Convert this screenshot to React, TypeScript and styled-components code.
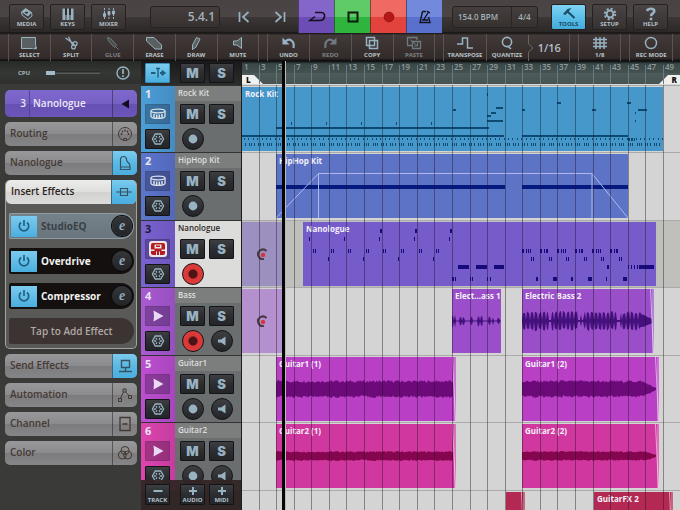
import React from 'react';
import styled, { createGlobalStyle, css } from 'styled-components';

const GlobalStyle = createGlobalStyle`
  * { box-sizing: border-box; }
  html, body { margin: 0; padding: 0; background: #1b1a1a; }
  body { font-family: "Open Sans", "Noto Sans", sans-serif; overflow: hidden; }
  button { font-family: inherit; margin: 0; padding: 0; border: 0; background: none; color: inherit; cursor: pointer; }
  h1, h2, p, ul, li { margin: 0; padding: 0; list-style: none; font-weight: 600; }
  svg { display: block; flex: none; }
`;

const ICE = '#98b2c1';

const Shell = styled.div`
  height: 100vh;
  display: flex;
  flex-direction: column;
  overflow: hidden;
  color: #a9b6bd;
`;

/* ---------- transport bar ---------- */

const TransportBar = styled.header`
  height: 33px;
  flex: none;
  display: flex;
  align-items: center;
  padding: 0 12px 0 9px;
  background: linear-gradient(#494343, #4b4645 50%, #3c3736 51%, #2d2928 95%, #141212);
`;

const ButtonGroup = styled.div<{ $end?: boolean }>`
  display: flex;
  gap: 6px;
  ${(p) => p.$end && css`margin-left: auto;`}
`;

const PanelButton = styled.button<{ $active?: boolean }>`
  width: 35px;
  height: 26px;
  display: flex;
  flex-direction: column;
  align-items: center;
  justify-content: space-between;
  padding: 2px 0 1px;
  border: 1px solid #262121;
  border-radius: 2px;
  font-size: 6px;
  line-height: 7px;
  font-weight: 700;
  color: ${(p) => (p.$active ? '#1c4a63' : '#b4bfc6')};
  background: ${(p) =>
    p.$active ? 'linear-gradient(#7fd3f5, #5bbfe9 50%, #43abdb)' : 'linear-gradient(#4a4444, #363131)'};
`;

const Display = styled.div`
  height: 22px;
  display: flex;
  align-items: center;
  border: 1px solid #272222;
  border-radius: 3px;
  background: linear-gradient(#443f3e, #37322f);
  color: #a3b1ba;
  font-weight: 600;
`;

const Position = styled(Display)`
  width: 70px;
  margin-left: 24px;
  padding-right: 4px;
  justify-content: flex-end;
  font-size: 12px;
  line-height: 20px;
`;

const Tempo = styled(Display)`
  width: 86px;
  margin-left: 10px;
  font-size: 8px;
  line-height: 20px;
`;

const TempoPart = styled.span<{ $grow?: boolean }>`
  width: 26px;
  text-align: center;
  border-left: 1px solid #2a2626;
  ${(p) => p.$grow && css`width: auto; flex: 1; padding-left: 5px; text-align: left; border-left: 0;`}
`;

const Transport = styled.div`
  display: flex;
  margin-left: 6px;
  align-self: stretch;
`;

const TransportButton = styled.button<{ $tone?: string; $tone2?: string }>`
  width: 36px;
  display: flex;
  align-items: center;
  justify-content: center;
  ${(p) =>
    p.$tone &&
    css`
      border-left: 1px solid rgba(30, 20, 30, 0.5);
      background: linear-gradient(${p.$tone} 50%, ${p.$tone2} 52%);
    `}
`;

/* ---------- edit toolbar ---------- */

const Toolbar = styled.nav`
  height: 28px;
  flex: none;
  display: flex;
  padding: 1px 7px 0 8px;
  background: linear-gradient(#181515, #423a39 8%, #3a3231 50%, #322b2a 90%, #0c0b0b);
`;

const Cells = styled.div<{ $n: number }>`
  flex: ${(p) => p.$n} 0 0;
  display: flex;
  min-width: 0;
  border-left: 1px solid #5b5351;
  border-right: 1px solid #5b5351;
  & + & { margin-left: 8px; }
`;

const ToolButton = styled.button<{ $dim?: boolean }>`
  flex: 1 0 0;
  min-width: 0;
  display: flex;
  flex-direction: column;
  align-items: center;
  justify-content: space-between;
  padding: 2px 0 2px;
  font-size: 6px;
  line-height: 8px;
  font-weight: 700;
  white-space: nowrap;
  color: #b9c4ca;
  & > svg, & > span { opacity: ${(p) => (p.$dim ? 0.55 : 1)}; }
  & + & { border-left: 1px solid #5b5351; }
`;

const QuantizeValue = styled.button`
  flex: 1 0 0;
  display: flex;
  align-items: center;
  font-size: 11px;
  line-height: 14px;
  font-weight: 600;
  color: #b4bfc6;
  gap: 4px;
`;

/* ---------- body ---------- */

const Body = styled.main`
  flex: 1;
  min-height: 0;
  display: flex;
`;

const Inspector = styled.aside`
  width: 141px;
  flex: none;
  background: #3a3a38;
`;

const CpuRow = styled.div`
  height: 23px;
  display: flex;
  align-items: center;
  padding: 0 11px 0 18px;
  gap: 16px;
  font-size: 6px;
  line-height: 8px;
  font-weight: 700;
  background: linear-gradient(#282a27, #343733 50%, #2d302c);
`;

const Meter = styled.div`
  flex: 1;
  height: 3px;
  background: linear-gradient(#1d1f1d, #656966);
`;

const MeterFill = styled.div`
  height: 4px;
  background: #a5bac7;
`;

const Sections = styled.div`
  display: flex;
  flex-direction: column;
  gap: 5px;
  padding: 6px 4px 0 5px;
`;

const Selected = styled.button`
  height: 27px;
  display: flex;
  align-items: stretch;
  border-radius: 5px;
  overflow: hidden;
  font-size: 10px;
  line-height: 27px;
  font-weight: 600;
  color: #ece8f6;
  text-align: left;
  background: linear-gradient(#7f69cd, #7660c5 50%, #6650b3 51%, #6b55ba);
`;

const SelectedNumber = styled.span`
  width: 25px;
  padding-right: 3px;
  text-align: right;
  border-right: 1px solid #55439a;
`;

const SelectedName = styled.span`
  flex: 1;
  padding-left: 3px;
`;

const IconCell = styled.span<{ $on?: boolean }>`
  width: 25px;
  display: flex;
  align-items: center;
  justify-content: center;
  border-left: 1px solid rgba(40, 36, 36, 0.55);
  ${(p) => p.$on && css`background: linear-gradient(#7ccbee, #5ab9e5 50%, #4aaedf);`}
`;

const Section = styled.button<{ $open?: boolean }>`
  width: 100%;
  height: 24px;
  display: flex;
  align-items: stretch;
  border-radius: 5px;
  overflow: hidden;
  font-size: 10px;
  line-height: 23px;
  font-weight: 600;
  color: ${(p) => (p.$open ? '#2c2320' : '#463a35')};
  text-align: left;
  background: ${(p) =>
    p.$open
      ? 'linear-gradient(#ececeb, #dededd 50%, #d2d2d1 51%, #dcdcdb)'
      : 'linear-gradient(#98989a, #8b8b8d 50%, #7c7c7e 51%, #868688)'};
`;

const SectionName = styled.span`
  flex: 1;
  padding-left: 5px;
`;

const EffectGroup = styled.div`
  border: 1px solid #a2a2a2;
  border-top: 0;
  border-radius: 5px;
  background: #595958;
`;

const Effects = styled.div`
  display: flex;
  flex-direction: column;
  gap: 9px;
  padding: 9px 2px 4px 3px;
`;

const Effect = styled.div<{ $off?: boolean }>`
  height: 26px;
  display: flex;
  align-items: center;
  padding: 2px 1px 2px 2px;
  border-radius: 2px 13px 13px 2px;
  font-size: 10px;
  line-height: 22px;
  color: ${(p) => (p.$off ? '#394146' : '#f2f2f2')};
  background: ${(p) => (p.$off ? 'linear-gradient(#76828a, #69757c)' : '#14100f')};
  ${(p) => p.$off && css`box-shadow: inset 0 0 0 1px #8f9ba2;`}
`;

const Power = styled.button`
  width: 26px;
  height: 21px;
  display: flex;
  align-items: center;
  justify-content: center;
  background: linear-gradient(#7ccbee, #4aaedf);
`;

const EffectName = styled.span`
  flex: 1;
  padding-left: 4px;
  font-weight: 700;
`;

const EditEffect = styled.button`
  width: 20px;
  height: 20px;
  margin-right: 1px;
  border-radius: 50%;
  background: linear-gradient(#34363a, #232428);
  box-shadow: 0 0 0 1px #0d0c0c;
  color: #93a9b8;
  font: italic 700 14px "Liberation Serif", serif;
  line-height: 16px;
`;

const AddEffect = styled.button`
  height: 26px;
  border-radius: 2px 13px 13px 2px;
  background: #3c3433;
  color: #b0a7a3;
  font-size: 10px;
  line-height: 24px;
  font-weight: 600;
`;

/* ---------- track list ---------- */

const TrackPanel = styled.section`
  position: relative;
  width: 101px;
  flex: none;
  overflow: hidden;
  border-right: 1px solid #1c1c1c;
  background: #3a3a38;
`;

const TrackTop = styled.div`
  height: 24px;
  display: flex;
  gap: 4px;
  align-items: center;
  padding: 0 0 0 4px;
  background: linear-gradient(#191919, #2c2e2b);
`;

const Key = styled.button<{ $active?: boolean; $bare?: boolean; $gap?: boolean }>`
  width: 25px;
  height: 20px;
  flex: none;
  display: flex;
  align-items: center;
  justify-content: center;
  border: 1px solid #131417;
  border-radius: 1px;
  background: linear-gradient(#3c3e41, #2b2d30 50%, #232528);
  color: ${ICE};
  font: 900 13px Inter, "Open Sans", sans-serif;
  line-height: 18px;
  ${(p) => p.$gap && css`margin-right: 6px;`}
  ${(p) => p.$active && css`background: linear-gradient(#7ccbee, #4aaedf); border-color: #3a8fb8;`}
  ${(p) => p.$bare && css`background: rgba(20, 10, 30, 0.28); border-color: rgba(20, 10, 30, 0.1);`}
`;

const Track = styled.li<{ $tint: string }>`
  height: 67px;
  display: flex;
  border-top: 1px solid #333;
  background: ${(p) => p.$tint};
  &:nth-child(even) { height: 68px; }
`;

const Strip = styled.div`
  width: 34px;
  padding: 3px 0 0 4px;
  display: flex;
  flex-direction: column;
  gap: 5px;
  background: linear-gradient(90deg, transparent, rgba(20, 0, 60, 0.12));
`;

const TrackNumber = styled.span<{ $dark?: boolean }>`
  height: 10px;
  font-size: 11px;
  line-height: 10px;
  font-weight: 700;
  color: ${(p) => (p.$dark ? '#231c38' : '#e8e4f0')};
`;

const Pane = styled.div<{ $selected?: boolean }>`
  flex: 1;
  display: flex;
  flex-direction: column;
  background: ${(p) => (p.$selected ? '#dcdcda' : '#6b6e6e')};
`;

const TrackName = styled.h2<{ $dark?: boolean }>`
  height: 15px;
  padding-left: 3px;
  font-size: 8px;
  line-height: 14px;
  color: ${(p) => (p.$dark ? '#2e2626' : '#dedede')};
  background: ${(p) => (p.$dark ? 'transparent' : '#7c7e7e')};
`;

const Controls = styled.div`
  display: grid;
  grid-template-columns: 25px 25px;
  gap: 4px;
  padding: 3px 0 0 5px;
`;

const Round = styled.button<{ $armed?: boolean }>`
  width: 22px;
  height: 22px;
  display: flex;
  align-items: center;
  justify-content: center;
  justify-self: center;
  border-radius: 50%;
  border: 1px solid #121315;
  background: ${(p) =>
    p.$armed ? 'radial-gradient(#4c1414 28%, #d93636 36%, #e24040)' : 'linear-gradient(#3d3f42, #232528)'};
`;

const AddBar = styled.div`
  position: absolute;
  left: 0;
  right: 0;
  bottom: 0;
  height: 30px;
  display: flex;
  gap: 4px;
  padding: 4px 0 0 4px;
  background: rgba(50, 37, 37, 0.94);
`;

const AddButton = styled(Key)`
  height: 21px;
  flex-direction: column;
  justify-content: space-between;
  padding: 1px 0 0;
  font: 700 6px "Open Sans", sans-serif;
  line-height: 8px;
  color: #b4c3cc;
`;

/* ---------- arrange view ---------- */

const Timeline = styled.section`
  position: relative;
  flex: 1;
  min-width: 0;
  display: flex;
  flex-direction: column;
  overflow: hidden;
  background: #d3d4d3;
`;

const Ruler = styled.div`
  position: relative;
  height: 24px;
  flex: none;
  border-bottom: 1px solid #d5d8d8;
  background: linear-gradient(#0a0c0c, #3a4747 12%, #435151 50%, #4d5b5b 52%, #465454);
`;

const BarNumber = styled.span`
  position: absolute;
  top: 0;
  font-size: 8px;
  line-height: 11px;
  font-weight: 600;
  color: #8f9999;
`;

const Locator = styled.svg<{ $right?: boolean }>`
  position: absolute;
  bottom: 0;
  ${(p) => (p.$right ? css`right: 0;` : css`left: 0;`)}
`;

const LocatorLabel = styled.span<{ $right?: boolean }>`
  position: absolute;
  bottom: 0;
  z-index: 1;
  font-size: 8px;
  line-height: 9px;
  font-weight: 800;
  color: #111;
  ${(p) => (p.$right ? css`right: 3px;` : css`left: 4px;`)}
`;

const Lane = styled.div<{ $selected?: boolean }>`
  position: relative;
  height: 67px;
  flex: none;
  border-top: 1px solid #a9aaa9;
  background: ${(p) => (p.$selected ? '#bfc0bb' : 'transparent')};
  &:nth-of-type(odd) { height: 68px; }
  &:last-of-type { flex: 1; }
`;

const ClipBox = styled.div<{ $tint: string }>`
  position: absolute;
  top: 1px;
  height: 64px;
  overflow: hidden;
  background: ${(p) => p.$tint};
`;

const ClipTitle = styled.p`
  position: absolute;
  top: 0;
  left: 3px;
  font-size: 8px;
  line-height: 14px;
  font-weight: 700;
  color: #f4f1fa;
  white-space: nowrap;
`;

const Ghost = styled.div<{ $tint: string }>`
  position: absolute;
  top: 1px;
  left: 0;
  width: 40px;
  height: 64px;
  display: flex;
  align-items: center;
  justify-content: center;
  background: ${(p) => p.$tint};
`;

const GridLines = styled.svg`
  position: absolute;
  inset: 0;
  width: 100%;
  height: 100%;
  pointer-events: none;
`;

const PlayCursor = styled.div`
  position: absolute;
  top: 0;
  bottom: 0;
  left: 40px;
  width: 4px;
  border-right: 1px solid #b9b9b9;
  background: #050505;
`;

/* ---------- icons ---------- */

type IconProps = { w: number; h: number; c?: string; sw?: number; children: React.ReactNode };
const Icon = ({ w, h, c = ICE, sw = 1, children }: IconProps) => (
  <svg width={w} height={h} viewBox={`0 0 ${w} ${h}`} fill="none" stroke={c} strokeWidth={sw} aria-hidden="true">
    {children}
  </svg>
);

const DARK = '#43372f';
const NAVY = '#39525f';

const icons = {
  media: (
    <Icon w={14} h={14}>
      <path d="M5.500 1.500 11.500 5.500 12 9 8 12.500 2 8 1.500 5Z" />
      <path d="M5.500 1.500 11.500 5.500 8 9.500 1.500 5Z" fill={ICE} stroke="none" />
      <path d="M5.500 4.500 8.500 5 7 7 4.500 6Z" fill="#3d3838" stroke="none" />
    </Icon>
  ),
  keys: (
    <Icon w={14} h={14}>
      <path d="M1.500 1.500h3V13h-3ZM5.500 1.500h3V13h-3ZM9.500 1.500h3V13h-3Z" fill={ICE} stroke="none" />
      <path d="M5 1v7M9 1v7" stroke="#332e2e" strokeWidth="2" />
    </Icon>
  ),
  mixer: (
    <Icon w={14} h={14}>
      <path d="M2.500 1v12M7 1v12M11.500 1v12" strokeDasharray="2 1" />
      <path d="M1.500 6.500h2v3h-2ZM6 4.500h2v3h-2ZM10.500 4h2v3h-2Z" fill={ICE} />
    </Icon>
  ),
  tools: (
    <Icon w={14} h={14} c="#1d4d66">
      <path d="M5.500 4.500 12.500 11" strokeWidth="2" />
      <path d="M1 7 5.500 2 9.500 1 7 4 3.500 8Z" fill="#1d4d66" stroke="none" />
    </Icon>
  ),
  setup: (
    <Icon w={14} h={14}>
      <circle cx="7" cy="7" r="3.400" strokeWidth="2" />
      <circle cx="7" cy="7" r="5.200" strokeWidth="2" strokeDasharray="2.050 2.034" />
    </Icon>
  ),
  help: (
    <Icon w={14} h={14} sw={2.6}>
      <path d="M3 4C4 1 10.500 1 10.300 4.200 10.200 6.500 7 6.300 7 9.300M7 10.700v2.600" />
    </Icon>
  ),
  prev: <Icon w={12} h={12} sw={1.7}><path d="M1.500 1v10M10.500 1 5 6l5.500 5" /></Icon>,
  next: <Icon w={12} h={12} sw={1.7}><path d="M10.500 1v10M1.500 1 7 6l-5.500 5" /></Icon>,
  loop: (
    <Icon w={18} h={12} c="#15111d" sw={1.6}>
      <path d="M7 1.500h6.500C15.500 1.500 17 3.400 16.500 5.500 16 8 14 9.500 12 9.500H2L7 5.500" />
    </Icon>
  ),
  stop: <Icon w={12} h={12} c="#0d1a0e" sw={2}><path d="M1.500 1.500h9v9h-9Z" /></Icon>,
  record: <Icon w={12} h={12}><circle cx="6" cy="6" r="4.800" fill="#b81717" stroke="#971313" /></Icon>,
  metronome: (
    <Icon w={14} h={16} c="#11131f" sw={1.4}>
      <path d="M4.500 2.500 2 13.500h10L10.500 8M4.500 2.500H8M5.500 11 10.500 3M4 11h6M9 2l3 2" />
    </Icon>
  ),
  select: (
    <Icon w={18} h={14}>
      <path d="M1.500 1.500h14v11h-14Z" fill="#59605f" />
      <path d="M12 13.500h5V9Z" fill={ICE} stroke="#332e2e" strokeWidth=".6" />
    </Icon>
  ),
  split: (
    <Icon w={14} h={14} sw={1.3}>
      <path d="M1.500 2 9.500 7.500M4.500 .8 8.800 9.500" />
      <circle cx="9.500" cy="11" r="1.900" /><circle cx="11.200" cy="7.500" r="1.900" />
    </Icon>
  ),
  glue: (
    <Icon w={14} h={14}>
      <path d="M1.500 1.500 4.500 2.500l6 6.500-2 2.500L2.500 5ZM9.500 10.500l3 3" fill="#59605f" />
    </Icon>
  ),
  erase: <Icon w={18} h={14}><path d="M1.500 1.500H9l7.500 7.500V13H10L1.500 5Z" fill="#59605f" /></Icon>,
  draw: <Icon w={12} h={14}><path d="M6.500 1.500 10 3 6 11l-3.500 2.500L2.500 9Z" fill="#59605f" /></Icon>,
  mute: <Icon w={12} h={14}><path d="M1.500 5H5l4.500-3.500v11L5 9H1.500Z" fill="#59605f" /></Icon>,
  undo: (
    <Icon w={14} h={14}>
      <path d="M3.500 5.500C7 2 12.800 4 11.500 12" strokeWidth="2.200" />
      <path d="M.5 1.500V8.500h7Z" fill={ICE} stroke="none" />
    </Icon>
  ),
  redo: (
    <Icon w={14} h={14}>
      <path d="M10.500 5.500C7 2 1.200 4 2.500 12" strokeWidth="2.200" />
      <path d="M13.500 1.500V8.500h-7Z" fill={ICE} stroke="none" />
    </Icon>
  ),
  copy: <Icon w={14} h={14}><path d="M1.500 1.500h8v8h-8ZM4.500 4.500h8v8h-8Z" strokeWidth="1.500" /></Icon>,
  paste: (
    <Icon w={16} h={14}>
      <path d="M6 9.500H1.500v-8H11V4M6.500 5.500h8v7h-8Z" strokeWidth="1.300" />
      <path d="M4 3.500l7 6M11.500 6.500v3.500H8" />
    </Icon>
  ),
  transpose: <Icon w={18} h={14} sw={1.5}><path d="M1 8h5.500V2h5v10H17" /></Icon>,
  grid: <Icon w={16} h={14} sw={1.5}><path d="M4 1v12M8 1v12M12 1v12M1 3.500h14M1 7h14M1 10.500h14" /></Icon>,
  recMode: <Icon w={14} h={14} sw={1.4}><circle cx="7" cy="7" r="5.500" /></Icon>,
  chevron: <Icon w={6} h={26} c="#6c6361"><path d="M.5 0v9L5 13 .5 17v9" /></Icon>,
  alert: (
    <Icon w={14} h={14} sw={1.4}>
      <circle cx="7" cy="7" r="6" /><path d="M7 3v5M7 9.300v1.700" strokeWidth="1.700" />
    </Icon>
  ),
  midi: (
    <Icon w={16} h={16} c={DARK}>
      <circle cx="8" cy="8" r="6.500" /><path d="M6.500 14v-1.500h3V14" />
      <circle cx="8" cy="4.500" r=".9" fill={DARK} stroke="none" /><circle cx="5.500" cy="5.500" r=".9" fill={DARK} stroke="none" />
      <circle cx="10.500" cy="5.500" r=".9" fill={DARK} stroke="none" /><circle cx="4.500" cy="8" r=".9" fill={DARK} stroke="none" />
      <circle cx="11.500" cy="8" r=".9" fill={DARK} stroke="none" />
    </Icon>
  ),
  piano: <Icon w={14} h={16} c={NAVY}><path d="M2.500 14.500v-10C2.500.5 8.500.5 8.500 4.500c0 3 3.500 3 3.500 6.500v3.500ZM2.500 12H12" strokeWidth="1.200" /></Icon>,
  insert: <Icon w={18} h={12} c={NAVY} sw={1.2}><path d="M1 6h16M5.500 2.500h7v7h-7Z" /></Icon>,
  send: <Icon w={16} h={16} c={NAVY}><path d="M4.500 2.500h8v7h-8ZM8.500 9.500v4M2 13.500h13" strokeWidth="1.400" /></Icon>,
  automation: (
    <Icon w={16} h={16} c={DARK}>
      <path d="M1.500 11.500h3v3h-3ZM6 2h3v3H6ZM11.500 8.500h3v3h-3ZM3.500 11.500l3-6.500M8.500 5l3.500 3.500" />
    </Icon>
  ),
  channel: <Icon w={14} h={16} c={DARK}><path d="M2 1.500h10v13H2ZM4.500 8h5" strokeWidth="1.300" /></Icon>,
  color: (
    <Icon w={16} h={16} c={DARK}>
      <circle cx="8" cy="5.500" r="4" /><circle cx="5.300" cy="10" r="4" /><circle cx="10.700" cy="10" r="4" />
    </Icon>
  ),
  back: <Icon w={8} h={10} c="none"><path d="M8 .5v9L.5 5Z" fill="#120d1d" /></Icon>,
  power: <Icon w={14} h={14} c="#1f6284" sw={1.7}><path d="M4 3.500a4.700 4.700 0 1 0 6 0M7 1v6" /></Icon>,
  autoscroll: (
    <Icon w={18} h={12} c="#1f5f80">
      <path d="M2 6h4.500M11 6h3" strokeWidth="2" />
      <path d="M7 1.500h4M9 1.500v9" strokeWidth="1.400" />
      <path d="M13 3.500 16.500 6 13 8.500Z" fill="#1f5f80" />
    </Icon>
  ),
  drum: (
    <Icon w={18} h={14} c="#d6e1ea">
      <ellipse cx="9" cy="4" rx="7" ry="1.800" strokeWidth="1.300" />
      <path d="M2 4v5.500c1 2.500 13 2.500 14 0V4" strokeWidth="1.300" />
      <path d="M5 7v3.500M7.700 7.500v3.500M10.300 7.500v3.500M13 7v3.500" strokeWidth="1.500" />
    </Icon>
  ),
  synth: (
    <Icon w={20} h={18} c="none">
      <rect x="1" y="1" width="18" height="16" rx="3" fill="#ece6e6" />
      <rect x="3" y="3" width="14" height="12" rx="2" fill="#b51a20" />
      <path d="M6.500 4.500h7v4h-7ZM3 9.500h3.500v1.500H3ZM13.500 9.500H17v1.500h-3.500ZM8 11.500h1v3.500H8ZM11 11.500h1v3.500h-1Z" fill="#ece6e6" />
      <path d="M8 5.500h4v1.500H8Z" fill="#b51a20" />
    </Icon>
  ),
  play: <Icon w={12} h={12} c="none"><path d="M1.500 .5 11.500 6l-10 5.500.5-5.500Z" fill="#e9d9f2" /></Icon>,
  freeze: (
    <Icon w={14} h={14} sw={1.3}>
      <path d="M4.300 2h5.400L12.600 7 9.700 12H4.300L1.400 7Z" />
      <path d="M5 4 6 5.700M9 4 8 5.700M5 10 6 8.300M9 10 8 8.300M3 7h2.300M11 7H8.700" />
    </Icon>
  ),
  dot: <Icon w={10} h={10} c="none"><circle cx="5" cy="5" r="4.400" fill={ICE} /></Icon>,
  speaker: <Icon w={10} h={12} c="none"><path d="M1 4.500h3L8.500 1.500v9L4 7.500H1Z" fill={ICE} /></Icon>,
  plus: <Icon w={10} h={10} sw={2}><path d="M5 1v8M1 5h8" /></Icon>,
  minus: <Icon w={10} h={10} sw={2}><path d="M.5 5h9" /></Icon>,
  armed: (
    <Icon w={12} h={12} c="#473943" sw={2}>
      <path d="M10.500 3.200A4.800 4.800 0 1 0 8 11" /><circle cx="7" cy="7" r="2.200" fill="#d8343b" stroke="none" />
    </Icon>
  ),
  quantize: (
    <Icon w={14} h={14} sw={1.6}><circle cx="7" cy="6" r="4.600" /><path d="M7.500 10 11 12.800" /></Icon>
  ),
};

/* ---------- data ---------- */

const BAR = 8.79;
const barX = (bar: number) => Math.max(0, Math.round((bar - 1) * BAR) - 1);

type Mark = [x: number, y: number, w: number, h: number];

const Notes = ({ marks, color }: { marks: Mark[]; color: string }) => (
  <g fill={color}>
    {marks.map(([x, y, w, h], i) => <rect key={i} x={x} y={y} width={w} height={h} />)}
  </g>
);

const rockNotes: Mark[] = [
  [34, 40, 213, 2], [0, 48, 262, 2], [280, 48, 106, 2],
  [49, 35, 1, 3], [84, 35, 1, 3], [119, 35, 1, 3], [154, 35, 1, 3], [189, 35, 1, 3],
  [211, 22, 3, 2], [245, 6, 1, 3], [254, 20, 7, 2], [249, 25, 5, 2], [245, 28, 4, 2], [245, 33, 16, 2],
  [280, 22, 3, 2], [315, 15, 4, 2], [350, 22, 4, 2], [385, 15, 4, 2], [396, 22, 9, 2], [393, 25, 1, 2], [393, 33, 1, 2],
];
for (let i = 0; i < 96; i++) {
  rockNotes.push([Math.round(2 + i * 4.4), 51, 1, 2]);
  rockNotes.push([Math.round(3 + i * 4.4), 56, 1, 3]);
  if (i % 2) rockNotes.push([Math.round(5 + i * 4.4), 56, 1, 3]);
}
rockNotes.push([386, 51, 2, 3], [389, 51, 2, 3], [392, 51, 1, 3]);

const nanoNotes: Mark[] = [
  [138, 7, 2, 4], [173, 7, 2, 4], [208, 7, 2, 4],
  [67, 15, 1, 4], [102, 15, 1, 4], [137, 15, 1, 4], [172, 15, 1, 4], [207, 15, 1, 4],
  [86, 35, 1, 4], [121, 35, 1, 4], [156, 35, 1, 4], [191, 35, 1, 4],
  [216, 43, 11, 4], [234, 43, 11, 4], [252, 43, 10, 4],
  [210, 55, 2, 4], [213, 55, 1, 4], [228, 55, 1, 4], [230, 55, 1, 4], [245, 55, 1, 4], [248, 55, 1, 4],
  [294, 55, 2, 4], [311, 55, 4, 4], [329, 55, 2, 4], [346, 55, 4, 4], [364, 55, 1, 4], [381, 55, 4, 4],
  [365, 43, 2, 4], [386, 43, 1, 4], [389, 43, 1, 4], [392, 43, 1, 4], [395, 43, 1, 4], [397, 43, 15, 4],
];
for (let i = 0; i < 8; i++) {
  nanoNotes.push([71 + Math.round(i * 17.6), 27, 1, 4], [73 + Math.round(i * 17.6), 27, 1, 4]);
}
for (let i = 0; i < 6; i++) {
  const x = 280 + Math.round(i * 17.6);
  nanoNotes.push([x, 27, 2, 4], [x + 4, 27, 1, 4], [x + 6, 27, 1, 4], [x + (i % 2 ? 7 : 8), 27, 1, 4]);
  nanoNotes.push([x + 9, 35, 1, 4], [x + 11, 35, 1, 4]);
}

const noise = (n: number) => {
  const v = Math.sin(n * 12.9898) * 43758.5453;
  return v - Math.floor(v);
};

const wavePath = (from: number, to: number, mid: number, amp: (x: number) => number) => {
  const up: string[] = [];
  const down: string[] = [];
  for (let x = from; x <= to; x++) {
    const a = amp(x);
    up.push(`${x} ${(mid - a * (0.78 + noise(x) * 0.34)).toFixed(1)}`);
    down.unshift(`${x} ${(mid + a * (0.78 + noise(x + 500) * 0.34)).toFixed(1)}`);
  }
  return `M${up.join('L')}L${down.join('L')}Z`;
};

const Wave = (p: { from: number; to: number; mid: number; color: string; amp: (x: number) => number }) => (
  <path d={wavePath(p.from, p.to, p.mid, p.amp)} fill={p.color} />
);

const bassShort = (x: number) => {
  const spikes = [[210, 211, 6], [213, 213, 6], [218, 219, 4], [221, 222, 4], [229, 230, 4], [236, 237, 5], [239, 240, 5], [247, 248, 4], [251, 251, 4], [256, 257, 3]];
  const hit = spikes.find(([a, b]) => x >= a && x <= b);
  return hit ? hit[2] : 0.5;
};

const bassLong = (x: number) => {
  if (x > 396) return Math.max(1, 9 - (x - 396) * 0.5);
  if (x > 306 && x < 310) return 1;
  if (x > 336 && x < 343) return x % 3 ? 1 : 6;
  if (x > 374 && x < 379) return 1;
  return x % 4 === 0 ? 1 : 9;
};

type Clip = { title: string; start: number; end: number; tint: string; art?: React.ReactNode; tail?: boolean };
type TrackData = {
  name: string; tint: string; icon: React.ReactNode; audio?: boolean; armed?: boolean;
  selected?: boolean; ghost?: string; clips: Clip[];
};

const purpleWave = '#6b0a78';
const pinkWave = '#85064f';

const tracks: TrackData[] = [
  {
    name: 'Rock Kit', tint: '#4b9fd6', icon: icons.drum,
    clips: [{ title: 'Rock Kit', start: 1, end: 49, tint: '#4698ca', art: <Notes marks={rockNotes} color="#0d4a73" /> }],
  },
  {
    name: 'HipHop Kit', tint: '#5b76cc', icon: icons.drum,
    clips: [{
      title: 'HipHop Kit', start: 5, end: 45, tint: '#5d74c6',
      art: (
        <>
          <Notes marks={[[34, 31, 229, 4], [280, 31, 106, 4]]} color="#06197d" />
          <path d="M34 64 76.500 19.500H350L386 64M76.500 19.500V64M350 19.500V64" fill="none" stroke="#b0b7ef" />
        </>
      ),
    }],
  },
  {
    name: 'Nanologue', tint: '#7a62d0', icon: icons.synth, armed: true, selected: true, ghost: '#9c90c0',
    clips: [{ title: 'Nanologue', start: 8, end: 48.2, tint: '#765bcb', art: <Notes marks={nanoNotes} color="#170a7c" /> }],
  },
  {
    name: 'Bass', tint: '#a95ad2', icon: icons.play, audio: true, armed: true, ghost: '#b590cf',
    clips: [
      { title: 'Elect...ass 1', start: 25, end: 30.6, tint: '#9a4ec9', art: <Wave from={210} to={259} mid={32} color="#43107c" amp={bassShort} /> },
      { title: 'Electric Bass 2', start: 33, end: 48, tint: '#9a4ec9', tail: true, art: <Wave from={280} to={410} mid={32} color="#43107c" amp={bassLong} /> },
    ],
  },
  {
    name: 'Guitar1', tint: '#bd4fd0', icon: icons.play, audio: true,
    clips: [
      { title: 'Guitar1 (1)', start: 5, end: 25.5, tint: '#b93fc5', tail: true, art: <Wave from={34} to={211} mid={32} color={purpleWave} amp={() => 8} /> },
      { title: 'Guitar1 (2)', start: 33, end: 48.6, tint: '#b93fc5', tail: true, art: <Wave from={280} to={414} mid={32} color={purpleWave} amp={(x) => (x > 400 ? 8 - (x - 400) * 0.5 : 8)} /> },
    ],
  },
  {
    name: 'Guitar2', tint: '#dd45ae', icon: icons.play, audio: true,
    clips: [
      { title: 'Guitar2 (1)', start: 5, end: 25.5, tint: '#d1389f', tail: true, art: <Wave from={34} to={211} mid={32} color={pinkWave} amp={() => 4.5} /> },
      { title: 'Guitar2 (2)', start: 33, end: 48.6, tint: '#d1389f', tail: true, art: <Wave from={280} to={414} mid={32} color={pinkWave} amp={(x) => (x > 404 ? 4.5 - (x - 404) * 0.35 : 4.5)} /> },
    ],
  },
];

const fxClips: Clip[] = [
  { title: '', start: 31.2, end: 33.3, tint: '#b32953', tail: true },
  { title: 'GuitarFX 2', start: 41.2, end: 50.2, tint: '#b32953', tail: true },
];

type Tool = { label: string; icon: React.ReactNode; dim?: boolean };
const editTools: Tool[] = [
  { label: 'SELECT', icon: icons.select }, { label: 'SPLIT', icon: icons.split },
  { label: 'GLUE', icon: icons.glue, dim: true }, { label: 'ERASE', icon: icons.erase },
  { label: 'DRAW', icon: icons.draw }, { label: 'MUTE', icon: icons.mute },
];
const historyTools: Tool[] = [
  { label: 'UNDO', icon: icons.undo }, { label: 'REDO', icon: icons.redo, dim: true },
  { label: 'COPY', icon: icons.copy }, { label: 'PASTE', icon: icons.paste, dim: true },
];

/* ---------- components ---------- */

const ToolItem = ({ label, icon, dim }: Tool) => (
  <ToolButton $dim={dim} disabled={dim}>{icon}<span>{label}</span></ToolButton>
);

const SectionRow = ({ label, icon, on, open }: { label: string; icon: React.ReactNode; on?: boolean; open?: boolean }) => (
  <Section $open={open} aria-expanded={!!open}>
    <SectionName>{label}</SectionName>
    <IconCell $on={on}>{icon}</IconCell>
  </Section>
);

const EffectRow = ({ name, off }: { name: string; off?: boolean }) => (
  <Effect $off={off}>
    <Power aria-label={`${name} power`}>{icons.power}</Power>
    <EffectName>{name}</EffectName>
    <EditEffect aria-label={`Edit ${name}`}>e</EditEffect>
  </Effect>
);

const ClipView = ({ title, start, end, tint, art, tail }: Clip) => {
  const left = barX(start);
  const width = barX(end) - left;
  return (
    <ClipBox $tint={tint} style={{ left, width }}>
      <svg width={width} height={64}>
        <g transform={`translate(${-left} 0)`}>{art}</g>
        {tail && <path d={`M${width - 3.5} 0L${width - 0.5} 64M${width - 1} 0V64`} stroke="#fff" strokeOpacity=".55" />}
      </svg>
      <ClipTitle>{title}</ClipTitle>
    </ClipBox>
  );
};

const oddBars = Array.from({ length: 25 }, (_, i) => i * 2 + 1);

export default function App() {
  return (
    <Shell>
      <GlobalStyle />
      <TransportBar>
        <ButtonGroup>
          <PanelButton>{icons.media}MEDIA</PanelButton>
          <PanelButton>{icons.keys}KEYS</PanelButton>
          <PanelButton>{icons.mixer}MIXER</PanelButton>
        </ButtonGroup>
        <Position>5.4.1</Position>
        <Transport>
          <TransportButton aria-label="Previous">{icons.prev}</TransportButton>
          <TransportButton aria-label="Next">{icons.next}</TransportButton>
          <TransportButton aria-label="Cycle" $tone="#8466cb" $tone2="#6b4db4">{icons.loop}</TransportButton>
          <TransportButton aria-label="Stop" $tone="#5ecb66" $tone2="#2fb53d">{icons.stop}</TransportButton>
          <TransportButton aria-label="Record" $tone="#ee6a62" $tone2="#e2433c">{icons.record}</TransportButton>
          <TransportButton aria-label="Metronome" $tone="#7389dc" $tone2="#5970cd">{icons.metronome}</TransportButton>
        </Transport>
        <Tempo>
          <TempoPart $grow>154.0 BPM</TempoPart>
          <TempoPart>4/4</TempoPart>
        </Tempo>
        <ButtonGroup $end>
          <PanelButton $active>{icons.tools}TOOLS</PanelButton>
          <PanelButton>{icons.setup}SETUP</PanelButton>
          <PanelButton>{icons.help}HELP</PanelButton>
        </ButtonGroup>
      </TransportBar>

      <Toolbar>
        <Cells $n={6}>{editTools.map((t) => <ToolItem key={t.label} {...t} />)}</Cells>
        <Cells $n={4}>{historyTools.map((t) => <ToolItem key={t.label} {...t} />)}</Cells>
        <Cells $n={3}>
          <ToolItem label="TRANSPOSE" icon={icons.transpose} />
          <ToolItem label="QUANTIZE" icon={icons.quantize} />
          <QuantizeValue>{icons.chevron}1/16</QuantizeValue>
        </Cells>
        <Cells $n={1}><ToolItem label="1/8" icon={icons.grid} /></Cells>
        <Cells $n={1}><ToolItem label="REC MODE" icon={icons.recMode} /></Cells>
      </Toolbar>

      <Body>
        <Inspector>
          <CpuRow>
            CPU
            <Meter><MeterFill style={{ width: '16%' }} /></Meter>
            {icons.alert}
          </CpuRow>
          <Sections>
            <Selected>
              <SelectedNumber>3</SelectedNumber>
              <SelectedName>Nanologue</SelectedName>
              <IconCell>{icons.back}</IconCell>
            </Selected>
            <SectionRow label="Routing" icon={icons.midi} />
            <SectionRow label="Nanologue" icon={icons.piano} on />
            <EffectGroup>
              <SectionRow label="Insert Effects" icon={icons.insert} on open />
              <Effects>
                <EffectRow name="StudioEQ" off />
                <EffectRow name="Overdrive" />
                <EffectRow name="Compressor" />
                <AddEffect>Tap to Add Effect</AddEffect>
              </Effects>
            </EffectGroup>
            <SectionRow label="Send Effects" icon={icons.send} on />
            <SectionRow label="Automation" icon={icons.automation} />
            <SectionRow label="Channel" icon={icons.channel} />
            <SectionRow label="Color" icon={icons.color} />
          </Sections>
        </Inspector>

        <TrackPanel>
          <TrackTop>
            <Key $active $gap aria-label="Auto scroll">{icons.autoscroll}</Key>
            <Key aria-label="Mute all">M</Key>
            <Key aria-label="Solo all">S</Key>
          </TrackTop>
          <ul>
            {tracks.map((t, i) => (
              <Track key={t.name} $tint={t.tint}>
                <Strip>
                  <TrackNumber $dark={t.selected}>{i + 1}</TrackNumber>
                  <Key $bare aria-label={`${t.name} instrument`}>{t.icon}</Key>
                  <Key aria-label={`Freeze ${t.name}`}>{icons.freeze}</Key>
                </Strip>
                <Pane $selected={t.selected}>
                  <TrackName $dark={t.selected}>{t.name}</TrackName>
                  <Controls>
                    <Key aria-label={`Mute ${t.name}`}>M</Key>
                    <Key aria-label={`Solo ${t.name}`}>S</Key>
                    <Round $armed={t.armed} aria-label={`Arm ${t.name}`}>{!t.armed && icons.dot}</Round>
                    {t.audio && <Round aria-label={`Monitor ${t.name}`}>{icons.speaker}</Round>}
                  </Controls>
                </Pane>
              </Track>
            ))}
          </ul>
          <AddBar>
            <AddButton $gap>{icons.minus}TRACK</AddButton>
            <AddButton>{icons.plus}AUDIO</AddButton>
            <AddButton>{icons.plus}MIDI</AddButton>
          </AddBar>
        </TrackPanel>

        <Timeline>
          <Ruler>
            {oddBars.map((b) => <BarNumber key={b} style={{ left: barX(b) + 2 }}>{b}</BarNumber>)}
            <Locator width="21" height="9"><path d="M0 0h12l9 9H0Z" fill="#f0f0ee" /></Locator>
            <LocatorLabel>L</LocatorLabel>
            <Locator $right width="21" height="9"><path d="M21 0H9L0 9h21Z" fill="#f0f0ee" /></Locator>
            <LocatorLabel $right>R</LocatorLabel>
          </Ruler>
          {tracks.map((t) => (
            <Lane key={t.name} $selected={t.selected}>
              {t.ghost && <Ghost $tint={t.ghost}>{icons.armed}</Ghost>}
              {t.clips.map((c) => <ClipView key={c.title} {...c} />)}
            </Lane>
          ))}
          <Lane>
            {fxClips.map((c) => <ClipView key={c.start} {...c} />)}
          </Lane>
          <GridLines aria-hidden="true">
            {oddBars.slice(1).map((b) => (
              <React.Fragment key={b}>
                <line x1={barX(b) + 0.5} x2={barX(b) + 0.5} y1="4" y2="23" stroke="#6d7979" />
                <line x1={barX(b) + 0.5} x2={barX(b) + 0.5} y1="24" y2="100%" stroke="#1a1420" strokeOpacity=".42" />
              </React.Fragment>
            ))}
          </GridLines>
          <PlayCursor />
        </Timeline>
      </Body>
    </Shell>
  );
}
